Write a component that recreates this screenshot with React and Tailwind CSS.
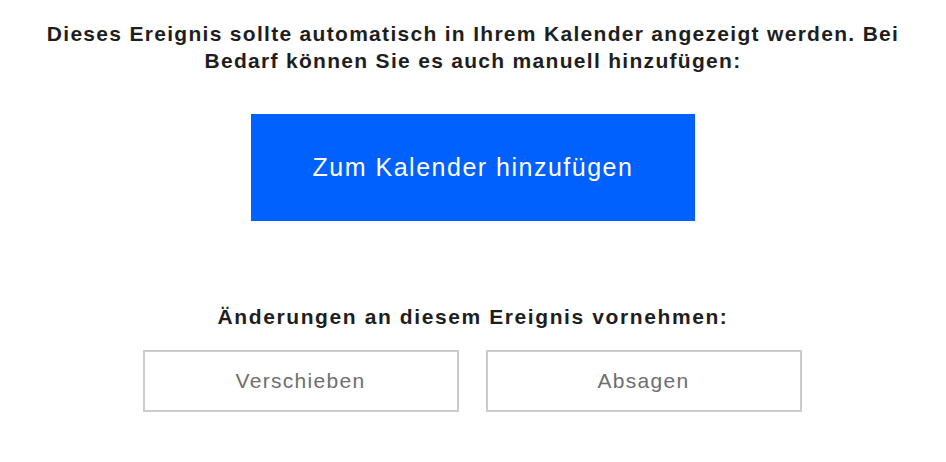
export default function App() {
  return (
    <div className="w-[946px] h-[462px] bg-white flex flex-col items-center" style={{ fontFamily: '"Liberation Sans", Arial, sans-serif' }}>
      <p className="mt-[20px] w-[900px] text-center text-[21px] leading-[27px] font-bold tracking-[1.3px] text-[#1e1e1e]">
        Dieses Ereignis sollte automatisch in Ihrem Kalender angezeigt werden. Bei Bedarf können Sie es auch manuell hinzufügen:
      </p>
      <div className="mt-[40px] w-[444px] h-[107px] bg-[#0061FE] flex items-center justify-center text-white text-[25px] tracking-[1.5px]">
        Zum Kalender hinzufügen
      </div>
      <p className="mt-[83px] text-center text-[21px] leading-[26px] font-bold tracking-[1.6px] text-[#1e1e1e]">
        Änderungen an diesem Ereignis vornehmen:
      </p>
      <div className="mt-[20px] flex gap-[27px] -translate-x-[1px]">
        <div className="w-[316px] h-[62px] border-2 border-[#cccccc] flex items-center justify-center text-[21px] tracking-[1.3px] text-[#6e6e6e]">
          Verschieben
        </div>
        <div className="w-[316px] h-[62px] border-2 border-[#cccccc] flex items-center justify-center text-[21px] tracking-[1.3px] text-[#6e6e6e]">
          Absagen
        </div>
      </div>
    </div>
  );
}
